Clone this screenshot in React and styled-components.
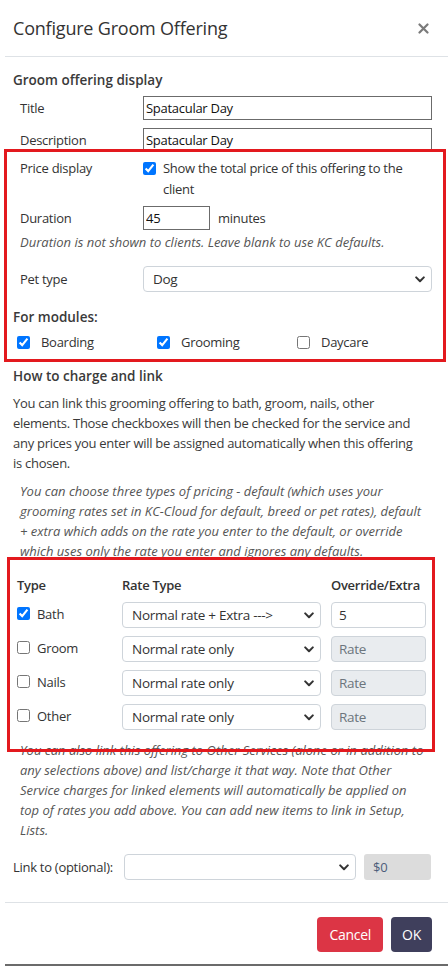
import styled, { createGlobalStyle } from 'styled-components';

const GlobalStyle = createGlobalStyle`
  body {
    margin: 0;
    background: #fff;
    color: #333;
    font-family: 'Open Sans', 'Noto Sans', sans-serif;
    font-size: 13px;
    letter-spacing: -0.28px;
  }
  * { box-sizing: border-box; }
  input, select, button { letter-spacing: inherit; }
`;

const Modal = styled.div`
  margin-left: 5px;
  width: 443px;
  border-bottom: 2px solid #6b6b6b;
  background: #fff;
`;

const Header = styled.div`
  height: 57px;
  display: flex;
  align-items: center;
  justify-content: space-between;
  padding: 0 19px 0 8px;
  border-bottom: 1px solid #dee2e6;
`;

const ModalTitle = styled.h5`
  margin: 0;
  font-size: 18px;
  font-weight: 400;
  letter-spacing: -0.2px;
  color: #333;
`;

const CloseButton = styled.button`
  border: 0;
  background: none;
  padding: 0;
  display: flex;
  cursor: pointer;
`;

const Body = styled.div`
  padding: 13px 16px 22px 8px;
`;

const SectionHeading = styled.div`
  font-size: 13.5px;
  font-weight: 600;
  line-height: 20px;
  letter-spacing: 0;
  color: #3a3a3a;
  margin-top: ${p => p.$mt || 0}px;
`;

const FieldRow = styled.div`
  display: grid;
  grid-template-columns: 123px 1fr;
  align-items: ${p => p.$align || 'center'};
  padding-left: 7px;
  margin-top: ${p => p.$mt || 0}px;
  line-height: 21px;
`;

const Label = styled.label`
  color: #333;
  white-space: nowrap;
`;

const TextInput = styled.input`
  height: 24px;
  width: ${p => p.$width || '100%'};
  border: 1px solid #6b6b6b;
  padding: 0 2px;
  font: inherit;
  font-size: 13px;
  color: #111;
  outline: none;
`;

const Highlight = styled.div`
  position: relative;
  border: 3px solid #e3191e;
  margin: ${p => p.$margin};
  padding: ${p => p.$padding};
`;

const CheckLine = styled.label`
  display: flex;
  align-items: ${p => p.$top ? 'flex-start' : 'center'};
  gap: ${p => p.$gap || 7}px;
  line-height: ${p => p.$lh || 21}px;
`;

const Check = styled.input.attrs({ type: 'checkbox' })`
  margin: ${p => p.$top ? '4px 0 0' : '0'};
  width: 13px;
  height: 13px;
  flex: none;
`;

const InlineRow = styled.div`
  display: flex;
  align-items: center;
  gap: 8px;
`;

const Note = styled.p`
  margin: ${p => p.$mt || 0}px 0 0;
  padding-left: ${p => p.$indent || 0}px;
  font-style: italic;
  letter-spacing: 0;
  color: #555;
  line-height: 20px;
`;

const Paragraph = styled.p`
  margin: ${p => p.$mt || 0}px 0 0;
  line-height: 20px;
  color: #3a3a3a;
`;

const SelectWrap = styled.div`
  position: relative;
  width: ${p => p.$width || '100%'};
`;

const Select = styled.select`
  appearance: none;
  width: 100%;
  height: 26px;
  border: 1px solid #ced4da;
  border-radius: 4px;
  background: #fff;
  padding: 0 24px 0 ${p => p.$pl || 9}px;
  font: inherit;
  font-size: 13.5px;
  color: #333;
  outline: none;
`;

const Chevron = styled.svg`
  position: absolute;
  right: 7px;
  top: 10px;
  pointer-events: none;
`;

const ModuleGrid = styled.div`
  display: grid;
  grid-template-columns: repeat(3, 140px);
  padding-left: 4px;
  margin-top: 5px;
`;

const RateTable = styled.div`
  display: grid;
  grid-template-columns: 95px 199px 95px;
  column-gap: 10px;
  row-gap: 8px;
  align-items: center;
`;

const ColHead = styled.div`
  font-weight: 600;
  color: #333;
  line-height: 20px;
  margin-bottom: -1px;
`;

const RateInput = styled.input`
  height: 26px;
  width: 100%;
  border: 1px solid #ced4da;
  border-radius: 4px;
  padding: 0 7px;
  font: inherit;
  font-size: 13.5px;
  color: #333;
  background: ${p => p.disabled ? '#e9ecef' : '#fff'};
  outline: none;
  &::placeholder { color: #6c757d; }
`;

const LinkRow = styled.div`
  display: grid;
  grid-template-columns: 103px 232px 67px;
  column-gap: 8px;
  align-items: center;
  margin-top: 14px;
`;

const Amount = styled.div`
  height: 26px;
  border-radius: 3px;
  background: #dcdcdc;
  color: #4c5d7a;
  padding-left: 9px;
  line-height: 26px;
`;

const Footer = styled.div`
  border-top: 1px solid #dee2e6;
  display: flex;
  justify-content: flex-end;
  gap: 8px;
  padding: 14px 16px 12px;
`;

const Button = styled.button`
  height: 35px;
  padding: 0 ${p => p.$px || 12}px;
  border: 0;
  border-radius: 4px;
  color: #fff;
  background: ${p => p.$bg};
  font: inherit;
  font-size: 14px;
  cursor: pointer;
`;

const ChevronIcon = () => (
  <Chevron width="10" height="7" viewBox="0 0 10 7">
    <path d="M1.2 1.4 L5 5.2 L8.8 1.4" fill="none" stroke="#333" strokeWidth="2" strokeLinecap="round" strokeLinejoin="round" />
  </Chevron>
);

const DropDown = ({ value, width, pl }) => (
  <SelectWrap $width={width}>
    <Select $pl={pl} defaultValue={value}>
      <option value={value}>{value}</option>
    </Select>
    <ChevronIcon />
  </SelectWrap>
);

const rates = [
  { name: 'Bath', checked: true, type: 'Normal rate + Extra --->', value: '5' },
  { name: 'Groom', checked: false, type: 'Normal rate only' },
  { name: 'Nails', checked: false, type: 'Normal rate only' },
  { name: 'Other', checked: false, type: 'Normal rate only' },
];

export default function App() {
  return (
    <>
      <GlobalStyle />
      <Modal>
        <Header>
          <ModalTitle>Configure Groom Offering</ModalTitle>
          <CloseButton aria-label="Close">
            <svg width="11" height="11" viewBox="0 0 11 11">
              <path d="M1.5 1.5 L9.5 9.5 M9.5 1.5 L1.5 9.5" stroke="#7a7a7a" strokeWidth="2.2" strokeLinecap="round" />
            </svg>
          </CloseButton>
        </Header>

        <Body>
          <SectionHeading>Groom offering display</SectionHeading>
          <FieldRow $mt={6}>
            <Label>Title</Label>
            <TextInput defaultValue="Spatacular Day" />
          </FieldRow>
          <FieldRow $mt={8}>
            <Label>Description</Label>
            <TextInput defaultValue="Spatacular Day" />
          </FieldRow>

          <Highlight $margin="-3px -14px 0 -9px" $padding="6px 11px 7px 6px">
            <FieldRow $align="start">
              <Label>Price display</Label>
              <CheckLine $top>
                <Check defaultChecked $top />
                <span>Show the total price of this offering to the client</span>
              </CheckLine>
            </FieldRow>
            <FieldRow $mt={6}>
              <Label>Duration</Label>
              <InlineRow>
                <TextInput $width="67px" defaultValue="45" />
                <span>minutes</span>
              </InlineRow>
            </FieldRow>
            <Note $mt={2} $indent={7}>Duration is not shown to clients. Leave blank to use KC defaults.</Note>
            <FieldRow $mt={14}>
              <Label>Pet type</Label>
              <DropDown value="Dog" />
            </FieldRow>
            <SectionHeading $mt={15}>For modules:</SectionHeading>
            <ModuleGrid>
              <CheckLine $gap={11} $lh={20}><Check defaultChecked />Boarding</CheckLine>
              <CheckLine $gap={11} $lh={20}><Check defaultChecked />Grooming</CheckLine>
              <CheckLine $gap={11} $lh={20}><Check />Daycare</CheckLine>
            </ModuleGrid>
          </Highlight>

          <SectionHeading $mt={4}>How to charge and link</SectionHeading>
          <Paragraph $mt={7}>
            You can link this grooming offering to bath, groom, nails, other<br />
            elements. Those checkboxes will then be checked for the service and<br />
            any prices you enter will be assigned automatically when this offering<br />
            is chosen.
          </Paragraph>
          <Note $mt={8} $indent={7}>
            You can choose three types of pricing - default (which uses your<br />
            grooming rates set in KC-Cloud for default, breed or pet rates), default<br />
            + extra which adds on the rate you enter to the default, or override<br />
            which uses only the rate you enter and ignores any defaults.
          </Note>

          <Highlight $margin="-4px -3px 0 -6px" $padding="15px 6px 19px 7px">
            <RateTable>
              <ColHead>Type</ColHead>
              <ColHead>Rate Type</ColHead>
              <ColHead>Override/Extra</ColHead>
              {rates.map(r => (
                <>
                  <CheckLine key={r.name + 'c'} $lh={20} style={{ marginTop: -3 }}>
                    <Check defaultChecked={r.checked} />
                    {r.name}
                  </CheckLine>
                  <DropDown key={r.name + 's'} value={r.type} />
                  <RateInput
                    key={r.name + 'i'}
                    defaultValue={r.value}
                    placeholder="Rate"
                    disabled={!r.value}
                  />
                </>
              ))}
            </RateTable>
          </Highlight>

          <Note $mt={-12} $indent={7}>
            You can also link this offering to Other Services (alone or in addition to<br />
            any selections above) and list/charge it that way. Note that Other<br />
            Service charges for linked elements will automatically be applied on<br />
            top of rates you add above. You can add new items to link in Setup,<br />
            Lists.
          </Note>

          <LinkRow>
            <Label>Link to (optional):</Label>
            <DropDown value="" />
            <Amount>$0</Amount>
          </LinkRow>
        </Body>

        <Footer>
          <Button $bg="#dc3545">Cancel</Button>
          <Button $bg="#3f3f5c" $px={11}>OK</Button>
        </Footer>
      </Modal>
    </>
  );
}
